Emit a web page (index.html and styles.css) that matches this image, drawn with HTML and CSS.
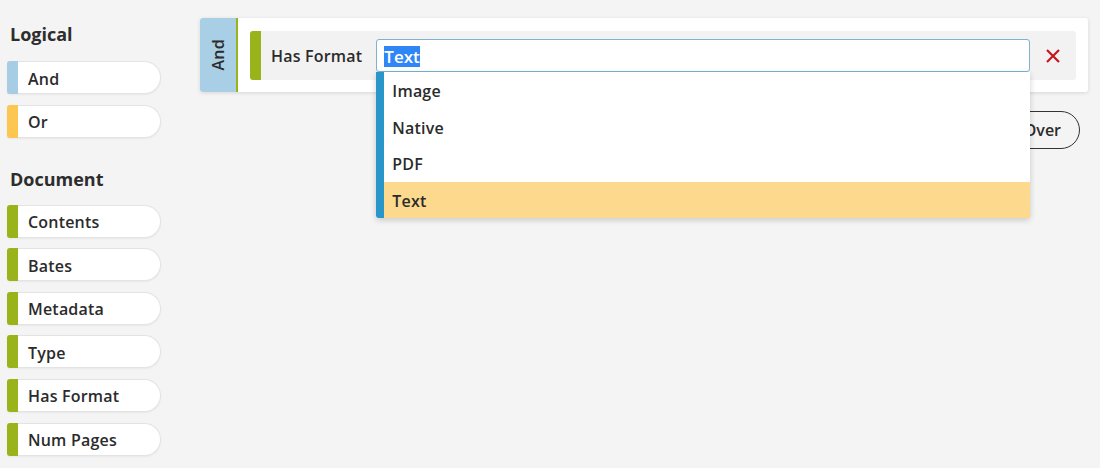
FILE: index.html
```html
<!DOCTYPE html>
<html lang="en">
<head>
  <meta charset="UTF-8">
  <title>Query Builder</title>
  <link rel="stylesheet" href="styles.css">
</head>
<body>
  <div class="paleta">
    <h2>Logical</h2>
    <div class="bloco"><span class="cor azul"></span>And</div>
    <div class="bloco"><span class="cor amarelo"></span>Or</div>

    <h2 class="segundo">Document</h2>
    <div class="bloco"><span class="cor verde"></span>Contents</div>
    <div class="bloco"><span class="cor verde"></span>Bates</div>
    <div class="bloco"><span class="cor verde"></span>Metadata</div>
    <div class="bloco"><span class="cor verde"></span>Type</div>
    <div class="bloco"><span class="cor verde"></span>Has Format</div>
    <div class="bloco"><span class="cor verde"></span>Num Pages</div>
  </div>

  <div class="area">
    <div class="grupo">
      <div class="rotulo"><span>And</span></div>
      <div class="regras">
        <div class="regra">
          <span class="cor verde"></span>
          <span class="nome">Has Format</span>
          <div class="campo">
            <div class="entrada"><span class="selecionado">Text</span></div>
            <ul class="lista">
              <li>Image</li>
              <li>Native</li>
              <li>PDF</li>
              <li class="ativo">Text</li>
            </ul>
          </div>
          <button class="remover" title="Remove">
            <svg width="16" height="16" viewBox="0 0 16 16">
              <path d="M2 2 L14 14 M14 2 L2 14" stroke="#c8161d" stroke-width="2.2" fill="none"/>
            </svg>
          </button>
        </div>
      </div>
    </div>

    <div class="acoes">
      <button class="recomecar">Start Over</button>
    </div>
  </div>
</body>
</html>
```

FILE: styles.css
```css
body {
  margin: 0;
  font-family: "Open Sans", Arial, sans-serif;
  background-color: #f4f4f4;
  color: #2b2b2b;
  display: flex;
}

.paleta {
  width: 200px;
  flex-shrink: 0;
  padding: 21px 0 0 7px;
  box-sizing: border-box;
}

.paleta h2 {
  margin: 0 0 13px 3px;
  font-size: 18px;
  font-weight: 700;
  line-height: 27px;
  color: #2d2d2d;
}

.paleta h2.segundo {
  margin-top: 28px;
  margin-bottom: 12px;
}

.bloco {
  display: flex;
  align-items: center;
  width: 154px;
  height: 33px;
  box-sizing: border-box;
  padding-top: 2px;
  background-color: #fff;
  border: 1px solid #e3e3e3;
  border-left: none;
  border-radius: 3px 17px 17px 3px;
  margin-bottom: 10.6px;
  font-size: 16px;
  font-weight: 600;
  letter-spacing: 0.2px;
  box-shadow: 0 1px 2px rgba(0, 0, 0, 0.05);
}

.cor {
  display: block;
  width: 11px;
  align-self: stretch;
  border-radius: 3px 0 0 3px;
  margin-right: 10px;
  flex-shrink: 0;
}

.bloco .cor {
  margin-top: -3px;
  margin-bottom: -1px;
}

.azul { background-color: #a6cde3; }
.amarelo { background-color: #fdc651; }
.verde { background-color: #99b41b; }

.area {
  flex: 1;
  padding: 18px 12px 0 0;
}

.grupo {
  display: flex;
  background-color: #fff;
  border-radius: 3px;
  box-shadow: 0 1px 4px rgba(0, 0, 0, 0.12);
  height: 74px;
}

.rotulo {
  width: 36px;
  background-color: #a8cfe5;
  border-right: 2px solid #99b41b;
  border-radius: 3px 0 0 3px;
  display: flex;
  align-items: center;
  justify-content: center;
}

.rotulo span {
  writing-mode: vertical-rl;
  transform: rotate(180deg);
  font-size: 16px;
  font-weight: 600;
  letter-spacing: 0.3px;
  color: #2b2b2b;
}

.regras {
  flex: 1;
  padding: 13px 12px 12px 12px;
}

.regra {
  display: flex;
  align-items: center;
  background-color: #f2f2f2;
  height: 49px;
  border-radius: 3px;
}

.regra .cor {
  margin-right: 10px;
}

.regra .nome {
  font-size: 16px;
  font-weight: 600;
  letter-spacing: 0.2px;
  margin-right: 14px;
  padding-top: 1px;
  white-space: nowrap;
}

.campo {
  flex: 1;
  position: relative;
}

.entrada {
  height: 33px;
  box-sizing: border-box;
  border: 1px solid #7fb2cf;
  border-radius: 3px;
  background-color: #fff;
  padding: 2px 7px 0;
  display: flex;
  align-items: center;
  font-size: 17px;
  font-weight: 600;
}

.selecionado {
  background-color: #2f86f5;
  color: #fff;
  line-height: 21px;
}

.lista {
  position: absolute;
  top: 100%;
  left: 0;
  right: 0;
  margin: 0;
  padding: 0;
  list-style: none;
  background-color: #fff;
  border-left: 8px solid #2896c8;
  border-radius: 0 0 3px 3px;
  box-shadow: 0 2px 6px rgba(0, 0, 0, 0.18);
  z-index: 5;
}

.lista li {
  height: 36.5px;
  line-height: 38px;
  padding-left: 8px;
  font-size: 16px;
  font-weight: 600;
  letter-spacing: 0.2px;
  color: #2b2b2b;
}

.lista li.ativo {
  background-color: #fcd98c;
}

.remover {
  width: 46px;
  height: 33px;
  border: none;
  background: none;
  padding: 0;
  display: flex;
  align-items: center;
  justify-content: center;
  cursor: pointer;
}

.acoes {
  display: flex;
  justify-content: flex-end;
  margin-top: 19px;
  padding-right: 8px;
}

.recomecar {
  height: 38px;
  padding: 0 18px;
  border: 1px solid #333;
  border-radius: 19px;
  background-color: #f4f4f4;
  font-family: "Open Sans", Arial, sans-serif;
  font-size: 16px;
  font-weight: 600;
  color: #2b2b2b;
}
```
